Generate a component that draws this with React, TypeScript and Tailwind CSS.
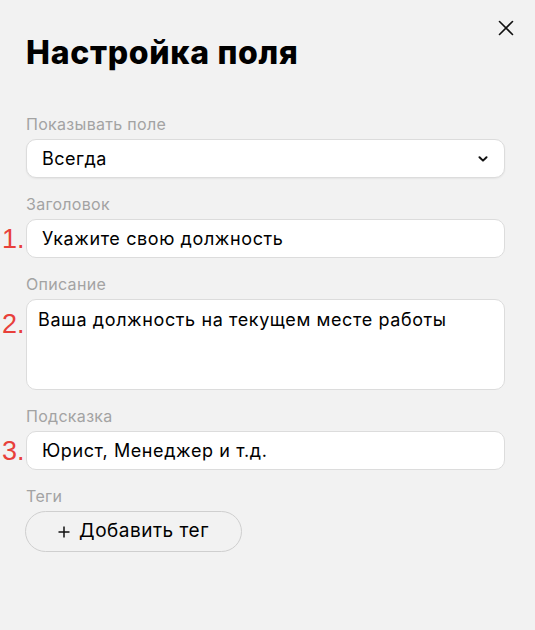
import React from "react";

const font = { fontFamily: "Inter, 'Noto Sans', sans-serif" };

function Num({ n }: { n: string }) {
  return (
    <span
      className="absolute left-[-24px] top-1/2 -translate-y-1/2 text-[27px] leading-none text-[#e8403a]"
      style={{ fontFamily: "'Liberation Sans', Arial, sans-serif" }}
    >
      {n}
    </span>
  );
}

function Label({ children }: { children: React.ReactNode }) {
  return <div className="text-[16px] leading-5 tracking-[0.3px] text-[#a3a3a3] mb-[5px]">{children}</div>;
}

export default function App() {
  return (
    <div className="relative w-[535px] h-[630px] bg-[#f2f2f2] overflow-hidden" style={font}>
      <button className="absolute left-[498px] top-[20px] w-[16px] h-[16px]">
        <svg viewBox="0 0 16 16" width="16" height="16" fill="none" stroke="#111" strokeWidth="1.6" strokeLinecap="round">
          <path d="M1.5 1.5 L14.5 14.5 M14.5 1.5 L1.5 14.5" />
        </svg>
      </button>
      <div className="pl-[26px] pr-[30px] pt-[31px]">
        <h1 className="text-[32px] leading-[44px] font-extrabold text-black tracking-[0.7px]">Настройка поля</h1>
        <div className="mt-[39px] flex flex-col gap-[16px]">
          <div>
            <Label>Показывать поле</Label>
            <div className="h-[39px] rounded-[10px] border border-[#dcdcdc] bg-white shadow-[0_1px_2px_rgba(0,0,0,0.06)] flex items-center justify-between pl-[15px] pr-[16px]">
              <span className="text-[18px] tracking-[0.5px] text-black">Всегда</span>
              <svg viewBox="0 0 10 6" width="10" height="6" fill="none" stroke="#111" strokeWidth="2" strokeLinecap="round" strokeLinejoin="round">
                <path d="M1.5 1.2 L5 4.6 L8.5 1.2" />
              </svg>
            </div>
          </div>
          <div>
            <Label>Заголовок</Label>
            <div className="relative">
              <Num n="1." />
              <div className="h-[39px] rounded-[10px] border border-[#dcdcdc] bg-white flex items-center pl-[15px]">
                <span className="text-[18px] tracking-[0.6px] text-black">Укажите свою должность</span>
              </div>
            </div>
          </div>
          <div>
            <Label>Описание</Label>
            <div className="relative">
              <span
                className="absolute left-[-24px] top-[12px] text-[27px] leading-none text-[#e8403a]"
                style={{ fontFamily: "'Liberation Sans', Arial, sans-serif" }}
              >
                2.
              </span>
              <div className="h-[91px] rounded-[10px] border border-[#dcdcdc] bg-white pl-[11px] pt-[8px]">
                <span className="text-[18px] leading-[22px] tracking-[0.6px] text-black">Ваша должность на текущем месте работы</span>
              </div>
            </div>
          </div>
          <div>
            <Label>Подсказка</Label>
            <div className="relative mt-[4px]">
              <Num n="3." />
              <div className="h-[39px] rounded-[10px] border border-[#dcdcdc] bg-white flex items-center pl-[15px]">
                <span className="text-[18px] tracking-[0.6px] text-black">Юрист, Менеджер и т.д.</span>
              </div>
            </div>
          </div>
          <div>
            <Label>Теги</Label>
            <button className="h-[41px] w-[217px] ml-[-1px] mt-[1px] rounded-full border border-[#cfcfcf] flex items-center justify-center gap-[9px] text-[19px] tracking-[0.5px] text-black">
              <svg viewBox="0 0 12 12" width="12" height="12" fill="none" stroke="#111" strokeWidth="1.5">
                <path d="M6 0.5 V11.5 M0.5 6 H11.5" />
              </svg>
              <span>Добавить тег</span>
            </button>
          </div>
        </div>
      </div>
    </div>
  );
}
